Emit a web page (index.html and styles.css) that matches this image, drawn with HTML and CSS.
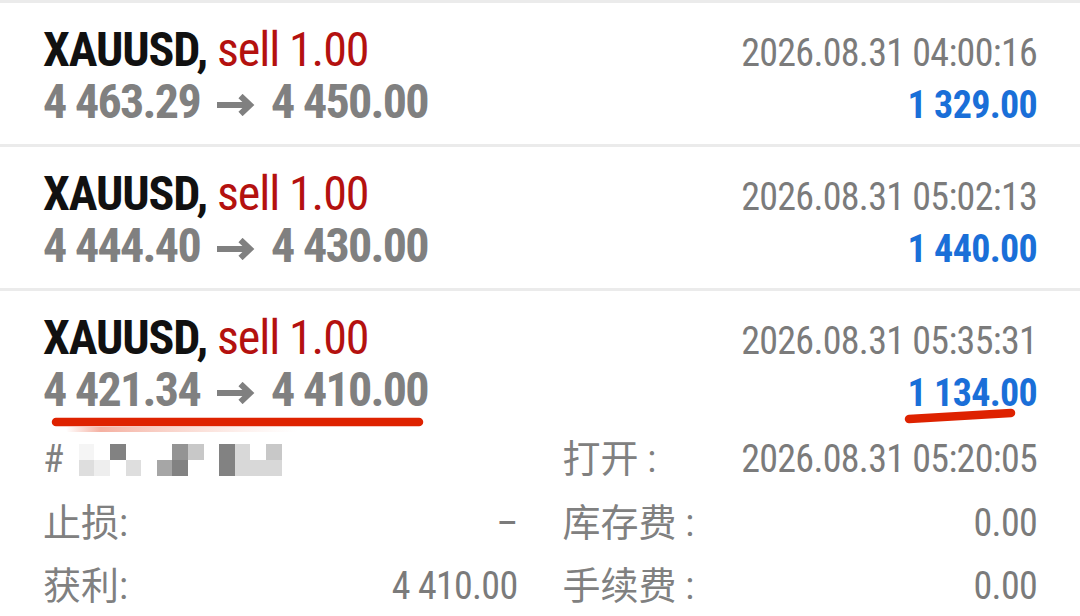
FILE: index.html
```html
<!DOCTYPE html>
<html lang="zh">
<head>
<meta charset="utf-8">
<title>Trades</title>
<link rel="stylesheet" href="styles.css">
</head>
<body>
<div class="list">
  <div class="row">
    <div class="line">
      <span class="title"><span class="sym">XAUUSD,</span> <span class="side">sell 1.00</span></span>
      <span class="date">2026.08.31 04:00:16</span>
    </div>
    <div class="line">
      <span class="price">4 463.29<svg class="arrow" viewBox="0 0 40 22" width="40" height="22" aria-label="→"><path d="M1 11H34" /><path d="M24.5 2L34 11L24.5 20" /></svg>4 450.00</span>
      <span class="profit">1 329.00</span>
    </div>
  </div>
  <div class="row">
    <div class="line">
      <span class="title"><span class="sym">XAUUSD,</span> <span class="side">sell 1.00</span></span>
      <span class="date">2026.08.31 05:02:13</span>
    </div>
    <div class="line">
      <span class="price">4 444.40<svg class="arrow" viewBox="0 0 40 22" width="40" height="22" aria-label="→"><path d="M1 11H34" /><path d="M24.5 2L34 11L24.5 20" /></svg>4 430.00</span>
      <span class="profit">1 440.00</span>
    </div>
  </div>
  <div class="row open">
    <div class="line">
      <span class="title"><span class="sym">XAUUSD,</span> <span class="side">sell 1.00</span></span>
      <span class="date">2026.08.31 05:35:31</span>
    </div>
    <div class="line">
      <span class="price">4 421.34<svg class="arrow" viewBox="0 0 40 22" width="40" height="22" aria-label="→"><path d="M1 11H34" /><path d="M24.5 2L34 11L24.5 20" /></svg>4 410.00</span>
      <span class="profit">1 134.00</span>
    </div>
  </div>
  <div class="details">
    <div class="field">
      <span class="label">#<span class="mosaic">
        <i class="s1"></i><i></i><i class="s8"></i><i></i><i></i><i></i><i class="s7"></i><i class="s4"></i><i></i><i class="s8"></i><i class="s3"></i><i></i><i class="s4"></i>
        <i class="s2"></i><i class="s1b"></i><i></i><i class="s2"></i><i></i><i class="s6"></i><i class="s8"></i><i></i><i></i><i class="s8"></i><i class="s3"></i><i class="s3"></i><i class="s3"></i>
      </span></span>
      <span class="value"></span>
    </div>
    <div class="field">
      <span class="label">打开 :</span>
      <span class="value">2026.08.31 05:20:05</span>
    </div>
    <div class="field">
      <span class="label">止损:</span>
      <span class="value">–</span>
    </div>
    <div class="field">
      <span class="label">库存费 :</span>
      <span class="value">0.00</span>
    </div>
    <div class="field">
      <span class="label">获利:</span>
      <span class="value">4 410.00</span>
    </div>
    <div class="field">
      <span class="label">手续费 :</span>
      <span class="value">0.00</span>
    </div>
  </div>
  <svg class="marks" width="1080" height="616" viewBox="0 0 1080 616">
    <defs>
      <linearGradient id="smear" x1="0" x2="1" y1="0" y2="0">
        <stop offset="0" stop-color="#e8502f" stop-opacity="0"/>
        <stop offset="0.15" stop-color="#e8502f" stop-opacity="0.45"/>
        <stop offset="0.6" stop-color="#ef8a70" stop-opacity="0.25"/>
        <stop offset="1" stop-color="#f5b0a0" stop-opacity="0"/>
      </linearGradient>
    </defs>
    <rect x="66" y="427" width="232" height="5" rx="2.5" fill="url(#smear)"/>
    <line x1="56" y1="422" x2="419" y2="422" stroke="#de2200" stroke-width="8.5" stroke-linecap="round"/>
    <line x1="909" y1="419" x2="1011" y2="413" stroke="#de2200" stroke-width="8.5" stroke-linecap="round"/>
  </svg>
</div>
</body>
</html>
```
FILE: styles.css
```css
html, body {
  margin: 0;
  padding: 0;
  background: #ffffff;
}
body {
  font-family: Roboto, "Noto Sans CJK SC", sans-serif;
  font-stretch: 75%;
  width: 1080px;
  height: 616px;
  overflow: hidden;
}
.list {
  position: relative;
  border-top: 3px solid #ebebeb;
}
.row {
  padding: 21px 43px 16px;
  border-bottom: 3px solid #ebebeb;
}
.row.open {
  border-bottom: none;
  padding-bottom: 12px;
}
.line {
  height: 52px;
  display: flex;
  align-items: baseline;
  justify-content: space-between;
  line-height: 52px;
  white-space: nowrap;
}
.title {
  font-size: 48px;
  letter-spacing: -1.1px;
}
.sym {
  font-weight: 700;
  color: #111111;
}
.side {
  font-weight: 400;
  color: #b4110f;
}
.price {
  font-size: 48px;
  font-weight: 700;
  color: #808080;
  letter-spacing: -1.7px;
}
.arrow {
  width: 40px;
  height: 22px;
  margin: 0 15px 0 16px;
  vertical-align: 2px;
  fill: none;
  stroke: #808080;
  stroke-width: 6;
  stroke-linecap: butt;
  stroke-linejoin: miter;
}
.date {
  font-size: 38px;
  color: #7b7b7b;
  letter-spacing: -0.7px;
}
.profit {
  font-size: 38px;
  font-weight: 700;
  color: #1a6fd8;
  letter-spacing: -0.7px;
}
.details {
  display: grid;
  grid-template-columns: 1fr 1fr;
  column-gap: 45px;
  padding: 0 43px;
}
.field {
  height: 63.5px;
  line-height: 63.5px;
  display: flex;
  align-items: baseline;
  justify-content: space-between;
  font-size: 38px;
  white-space: nowrap;
}
.label {
  color: #808080;
}
.value {
  color: #7b7b7b;
  letter-spacing: -0.7px;
}
.mosaic {
  display: inline-grid;
  grid-template-columns: repeat(13, 15.6px);
  grid-template-rows: 16px 16px;
  margin-left: 15px;
  vertical-align: 12px;
}
.mosaic i {
  display: block;
}
.mosaic .s1 { background: #f5f5f5; }
.mosaic .s1b { background: #eeeeee; }
.mosaic .s2 { background: #dedede; }
.mosaic .s3 { background: #d8d8d8; }
.mosaic .s4 { background: #c8c8c8; }
.mosaic .s6 { background: #a6a6a6; }
.mosaic .s7 { background: #949494; }
.mosaic .s8 { background: #828282; }
.marks {
  position: absolute;
  top: -3px;
  left: 0;
  pointer-events: none;
}
```
